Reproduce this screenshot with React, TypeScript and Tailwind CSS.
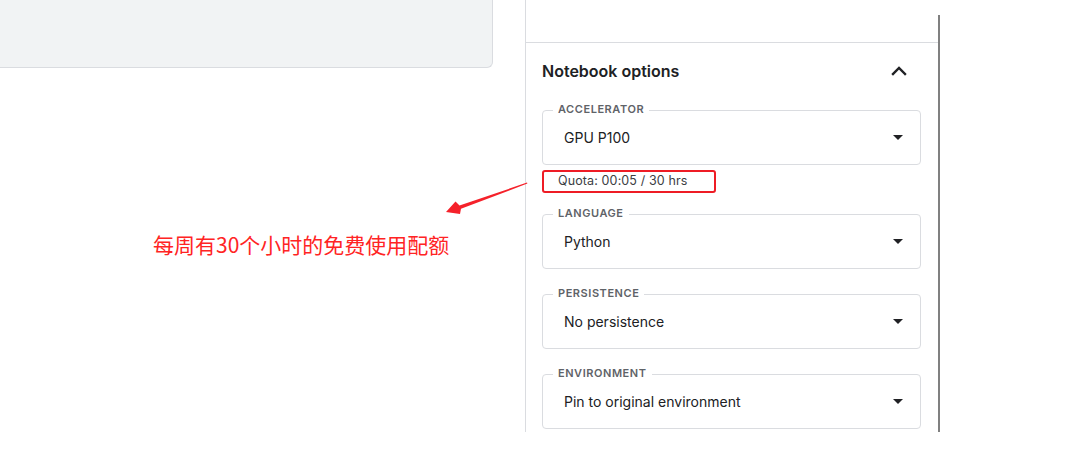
import React from 'react';

type Field = { label: string; value: string };

const fields: Field[] = [
    { label: 'Accelerator', value: 'GPU P100' },
    { label: 'Language', value: 'Python' },
    { label: 'Persistence', value: 'No persistence' },
    { label: 'Environment', value: 'Pin to original environment' },
];

function SelectField({ field }: { field: Field }) {
    return (
        <div className="relative h-[55px] rounded-[4px] border border-[#dadce0]">
            <span className="absolute -top-[8px] left-[10px] bg-white px-[5px] text-[11px] font-semibold uppercase leading-[12px] tracking-[0.05em] text-[#5f6368]">
                {field.label}
            </span>
            <div className="flex h-full items-center justify-between pl-[21px] pr-[17px] text-[14px] text-[#202124]">
                <span>{field.value}</span>
                <svg width="10" height="5" viewBox="0 0 10 5" className="text-[#202124]">
                    <path d="M0 0h10L5 5z" fill="currentColor" />
                </svg>
            </div>
        </div>
    );
}

export default function App() {
    const [accelerator, ...rest] = fields;

    return (
        <div className="relative flex h-[463px] w-[1090px] overflow-hidden bg-white font-['Inter',sans-serif]">
            {/* left side: card stub + annotation */}
            <div className="w-[493px] shrink-0">
                <div className="h-[68px] rounded-br-[6px] border-r border-b border-[#dadce0] bg-[#f1f3f4]"></div>
                <p className="ml-[153px] mt-[162px] whitespace-nowrap font-['Noto_Sans_CJK_SC',sans-serif] text-[21px] leading-[28px] text-[#ff2424]">
                    每周有30个小时的免费使用配额
                </p>
            </div>

            {/* right panel */}
            <div className="ml-[32px] flex items-start">
                <aside className="h-[432px] w-[413px] border-l border-[#dadce0]">
                    <div className="h-[43px] border-b border-[#dadce0]"></div>
                    <section className="pl-4 pr-[17px] pt-[18px]">
                        <div className="flex h-[20px] items-center justify-between">
                            <h2 className="text-[16px] font-semibold leading-[20px] text-[#202124]">Notebook options</h2>
                            <svg width="24" height="24" viewBox="0 0 24 24" fill="none" stroke="#202124" strokeWidth="2.4" strokeLinecap="square" className="mr-[10px]">
                                <path d="m18 15-6-6-6 6" />
                            </svg>
                        </div>

                        <div className="mt-[29px]">
                            <SelectField field={accelerator} />
                        </div>
                        <div className="mt-[5px] flex h-[23px] w-[174px] items-center rounded-[3px] border-2 border-[#ee1c25] pb-[1px] pl-[14px] text-[12.5px] tracking-[0.01em] text-[#3c4043]">
                            Quota: 00:05 / 30 hrs
                        </div>

                        <div className="mt-[21px] flex flex-col gap-[25px]">
                            {rest.map(f => (
                                <SelectField key={f.label} field={f} />
                            ))}
                        </div>
                    </section>
                </aside>
                <div className="mt-[15px] h-[417px] w-[2px] bg-[#808080]"></div>
            </div>

            {/* annotation arrow */}
            <svg className="pointer-events-none absolute inset-0" width="1090" height="463" viewBox="0 0 1090 463">
                <polygon
                    points="446,212 455.5,201.5 459.5,205.6 527,182.6 527.4,183.6 461,208.8 460,214"
                    fill="#f5212a"
                />
            </svg>
        </div>
    );
}
